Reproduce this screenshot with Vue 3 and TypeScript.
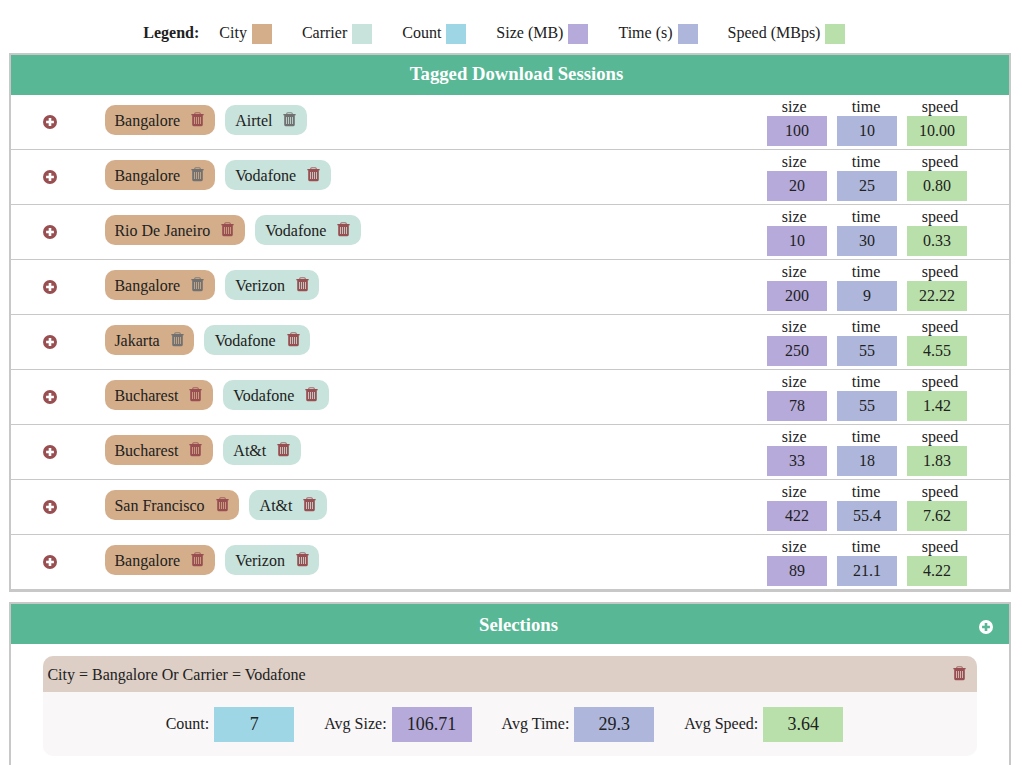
<script setup lang="ts">
import { defineComponent, h } from 'vue'

type Kind = 'city' | 'carrier' | 'count' | 'size' | 'time' | 'speed'

interface Tag {
  kind: Kind
  label: string
  muted?: boolean
}

interface Session {
  tags: Tag[]
  size: string
  time: string
  speed: string
}

const TrashIcon = defineComponent({
  render: () =>
    h('svg', { viewBox: '0 0 13 15', width: 13, height: 15 }, [
      h('path', {
        d: 'M3.7 2.2V1.7Q3.7 .7 4.7 .7H8.3Q9.3 .7 9.3 1.7V2.2',
        fill: 'none',
        stroke: 'currentColor',
        'stroke-width': 1.1,
        opacity: 0.8,
      }),
      h('path', {
        d: 'M.2 2.8Q.2 2 1 2H12Q12.8 2 12.8 2.8V3.3H.2Z',
        fill: 'currentColor',
      }),
      h('path', {
        'fill-rule': 'evenodd',
        d: 'M1.2 3H11.8V12.8Q11.8 14.2 10.4 14.2H2.6Q1.2 14.2 1.2 12.8ZM3.2 5V12.1H4V5ZM5.1 5V12.1H5.9V5ZM7.1 5V12.1H7.9V5ZM9 5V12.1H9.8V5Z',
        fill: 'currentColor',
      }),
    ]),
})

const PlusIcon = defineComponent({
  render: () =>
    h('svg', { viewBox: '0 0 14 14', width: 14, height: 14 }, [
      h('path', {
        'fill-rule': 'evenodd',
        d: 'M7 0A7 7 0 1 1 7 14A7 7 0 1 1 7 0ZM5.7 3.1V5.7H3.1V8.3H5.7V10.9H8.3V8.3H10.9V5.7H8.3V3.1Z',
        fill: 'currentColor',
      }),
    ]),
})

const legend: { label: string; kind: Kind }[] = [
  { label: 'City', kind: 'city' },
  { label: 'Carrier', kind: 'carrier' },
  { label: 'Count', kind: 'count' },
  { label: 'Size (MB)', kind: 'size' },
  { label: 'Time (s)', kind: 'time' },
  { label: 'Speed (MBps)', kind: 'speed' },
]

const city = (label: string, muted = false): Tag => ({ kind: 'city', label, muted })
const carrier = (label: string, muted = false): Tag => ({ kind: 'carrier', label, muted })

const sessions: Session[] = [
  { tags: [city('Bangalore'), carrier('Airtel', true)], size: '100', time: '10', speed: '10.00' },
  { tags: [city('Bangalore', true), carrier('Vodafone')], size: '20', time: '25', speed: '0.80' },
  { tags: [city('Rio De Janeiro'), carrier('Vodafone')], size: '10', time: '30', speed: '0.33' },
  { tags: [city('Bangalore', true), carrier('Verizon')], size: '200', time: '9', speed: '22.22' },
  { tags: [city('Jakarta', true), carrier('Vodafone')], size: '250', time: '55', speed: '4.55' },
  { tags: [city('Bucharest'), carrier('Vodafone')], size: '78', time: '55', speed: '1.42' },
  { tags: [city('Bucharest'), carrier('At&t')], size: '33', time: '18', speed: '1.83' },
  { tags: [city('San Francisco'), carrier('At&t')], size: '422', time: '55.4', speed: '7.62' },
  { tags: [city('Bangalore'), carrier('Verizon')], size: '89', time: '21.1', speed: '4.22' },
]

const metrics = ['size', 'time', 'speed'] as const

const stats: { label: string; value: string; kind: Kind }[] = [
  { label: 'Count:', value: '7', kind: 'count' },
  { label: 'Avg Size:', value: '106.71', kind: 'size' },
  { label: 'Avg Time:', value: '29.3', kind: 'time' },
  { label: 'Avg Speed:', value: '3.64', kind: 'speed' },
]
</script>

<template>
  <main class="page">
    <div class="legend">
      <b class="legend-title">Legend:</b>
      <div v-for="item in legend" :key="item.kind" class="legend-item">
        <span>{{ item.label }}</span>
        <i class="swatch" :class="item.kind"></i>
      </div>
    </div>

    <section class="panel">
      <h2 class="panel-head sessions-head">Tagged Download Sessions</h2>
      <div v-for="(session, i) in sessions" :key="i" class="row">
        <button class="icon-btn row-add" aria-label="Add tag"><PlusIcon /></button>
        <div class="tags">
          <div v-for="tag in session.tags" :key="tag.label" class="tag" :class="tag.kind">
            <span>{{ tag.label }}</span>
            <button class="icon-btn trash" :class="{ muted: tag.muted }" aria-label="Remove tag"><TrashIcon /></button>
          </div>
        </div>
        <div class="metrics">
          <div v-for="m in metrics" :key="m" class="metric">
            <span class="metric-label">{{ m }}</span>
            <div class="metric-value" :class="m">{{ session[m] }}</div>
          </div>
        </div>
      </div>
    </section>

    <section class="panel selections">
      <h2 class="panel-head with-action">
        <span>Selections</span>
        <button class="icon-btn head-add" aria-label="Add selection"><PlusIcon /></button>
      </h2>
      <article class="card">
        <header class="card-head">
          <span>City = Bangalore Or Carrier = Vodafone</span>
          <button class="icon-btn trash" aria-label="Remove selection"><TrashIcon /></button>
        </header>
        <div class="stats">
          <div v-for="s in stats" :key="s.kind" class="stat">
            <span>{{ s.label }}</span>
            <div class="stat-value" :class="s.kind">{{ s.value }}</div>
          </div>
        </div>
      </article>
    </section>
  </main>
</template>

<style>
body {
  background: #fff;
  overflow: hidden;
}
</style>

<style scoped>
.page {
  box-sizing: border-box;
  height: 765px;
  overflow: hidden;
  padding: 24px 11px 0 9px;
  font: 16px/20px "Liberation Serif", "Times New Roman", serif;
  color: #212121;
}
.city { background: #d4ae8a; }
.carrier { background: #c8e3db; }
.count { background: #9ed6e5; }
.size { background: #b5aada; }
.time { background: #aeb7db; }
.speed { background: #b9e0aa; }

.legend {
  display: flex;
  gap: 30px;
  height: 20px;
  padding-left: 134.35px;
  margin-bottom: 9px;
  line-height: 18px;
  white-space: nowrap;
}
.legend-title { margin-right: -10px; }
.legend-item { display: flex; gap: 5px; }
.swatch { width: 20px; height: 20px; }

.panel {
  border: 2px solid #c8c8c8;
}
.panel-head {
  box-sizing: border-box;
  margin: 0;
  height: 40px;
  background: #58b795;
  color: #fff;
  font-size: 18.72px;
  font-weight: bold;
  line-height: 38px;
  text-align: center;
}
.sessions-head { padding-left: 13px; }
.icon-btn {
  display: block;
  flex: none;
  border: 0;
  padding: 0;
  background: none;
  color: #994f52;
  cursor: pointer;
}
.icon-btn svg { display: block; }
.icon-btn.muted { color: #717171; }
.trash { margin-top: 1px; }

.row {
  box-sizing: border-box;
  height: 55px;
  border-bottom: 1px solid #c8c8c8;
  display: flex;
  align-items: flex-start;
}
.row-add { margin: 20px 48px 0 32px; }
.tags {
  flex: 1;
  display: flex;
  gap: 10px;
  padding-top: 10px;
}
.tag {
  box-sizing: border-box;
  height: 30px;
  border-radius: 10px;
  display: flex;
  align-items: flex-start;
  gap: 11px;
  padding: 6px 10.6px 0 9.4px;
}
.tag.carrier { padding: 6px 10.5px 0 10.4px; }
.metrics {
  display: flex;
  gap: 10px;
  padding: 2px 42px 0 0;
}
.metric { width: 60px; }
.metric-label {
  display: block;
  height: 19px;
  line-height: 20px;
  padding-left: 14.8px;
}
.metric-value {
  height: 30px;
  line-height: 30px;
  text-align: center;
}

.selections {
  margin-top: 10px;
  height: 200px;
}
.with-action {
  display: grid;
  grid-template-columns: 1fr auto 1fr;
  align-items: start;
}
.with-action span {
  grid-column: 2;
  margin-left: 17px;
  line-height: 42px;
}
.head-add {
  justify-self: end;
  margin: 16px 16.5px 0 0;
  color: #fff;
}
.card {
  margin: 12px 32px 0;
  border-radius: 10px;
  overflow: hidden;
  background: #f9f7f8;
}
.card-head {
  box-sizing: border-box;
  height: 36px;
  display: flex;
  justify-content: space-between;
  align-items: flex-start;
  padding: 9px 11px 0 4.4px;
  background: #ddcfc6;
}
.stats {
  box-sizing: border-box;
  height: 64px;
  display: flex;
  gap: 30px;
  padding: 15px 0 0 122.7px;
}
.stat {
  display: flex;
  gap: 5px;
  line-height: 34px;
  white-space: nowrap;
}
.stat-value {
  width: 80px;
  height: 35px;
  font-size: 18px;
  text-align: center;
}
</style>
